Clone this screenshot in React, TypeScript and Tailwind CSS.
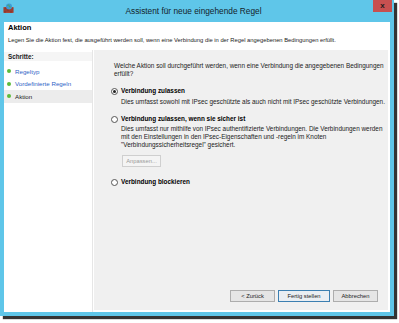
import React from "react";

const font = { fontFamily: '"Liberation Sans", Arial, sans-serif' };

function Radio({ checked }: { checked?: boolean }) {
  return (
    <span className="w-[7px] h-[7px] rounded-full border border-[#555] bg-white flex items-center justify-center shrink-0">
      {checked && <span className="w-[3px] h-[3px] rounded-full bg-[#222]" />}
    </span>
  );
}

function FirewallIcon() {
  return (
    <svg width="11" height="10" viewBox="0 0 11 10">
      <rect x="0.5" y="4" width="10" height="6" fill="#a9473a" />
      <path d="M0.5 6h10M0.5 8h10M3 4v2M7 4v2M5 6v2M2 8v2M8 8v2" stroke="#7a2d24" strokeWidth="0.6" />
      <circle cx="6" cy="3.5" r="3" fill="#3d9bd6" />
      <path d="M4.5 2.5c1-1 2-0.2 1.8 0.8c-0.3 1 1 1.2 1.5 0.5" stroke="#4caf50" strokeWidth="1" fill="none" />
    </svg>
  );
}

function Button({ label, primary, disabled }: { label: string; primary?: boolean; disabled?: boolean }) {
  return (
    <div
      className={`h-[12px] flex items-center justify-center text-[5.8px] border ${
        primary ? "border-[#3c7fb1] bg-[#e9eef3]" : "border-[#adadad] bg-[#e5e5e5]"
      } ${disabled ? "text-[#9a9a9a] bg-[#f4f4f4] border-[#cfcfcf]" : "text-[#222]"}`}
    >
      {label}
    </div>
  );
}

export default function App() {
  return (
    <div className="w-[399px] h-[323px] bg-white overflow-hidden" style={font}>
      <div className="w-[394px] h-[316px] bg-[#5fc6e9] flex flex-col shadow-[3px_3px_1px_rgba(30,30,30,0.9)]">
        {/* title bar */}
        <div className="h-[22px] flex items-start relative">
          <div className="pl-[3px] pt-[3px]">
            <FirewallIcon />
          </div>
          <div className="flex-1 text-center text-[8.3px] text-[#14242c] pt-[5px]">
            Assistent für neue eingehende Regel
          </div>
          <div className="w-[19px] h-[12px] bg-[#c75050] mr-[2px] flex items-center justify-center text-[8px] font-bold text-[#1c1c1c] leading-none">
            x
          </div>
        </div>

        {/* client */}
        <div className="flex-1 mx-[4px] mb-[4px] bg-white flex flex-col">
          <div className="h-[28px] px-[4px] pt-[1px]">
            <div className="text-[7.5px] font-bold text-black leading-[9px]">Aktion</div>
            <div className="text-[5.8px] text-[#222] mt-[4px] leading-[8px]">
              Legen Sie die Aktion fest, die ausgeführt werden soll, wenn eine Verbindung die in der Regel angegebenen Bedingungen erfüllt.
            </div>
          </div>

          <div className="flex-1 flex">
            {/* steps */}
            <div className="w-[89px] shrink-0 pt-[2px] border-r border-[#e6e6e6]">
              <div className="h-[9px] bg-[#f5f5f5] px-[4px] text-[6.3px] font-bold leading-[9px] text-[#222]">
                Schritte:
              </div>
              <div className="mt-[4px] flex flex-col text-[6.2px]">
                {[
                  { label: "Regeltyp", link: true },
                  { label: "Vordefinierte Regeln", link: true },
                  { label: "Aktion", link: false },
                ].map((s) => (
                  <div
                    key={s.label}
                    className={`h-[12.5px] flex items-center gap-[4px] px-[3px] ${s.link ? "text-[#2f63c6]" : "text-[#222] bg-[#ececec]"}`}
                  >
                    <span className="w-[4px] h-[4px] rounded-full bg-[#5dbb3a]" />
                    {s.label}
                  </div>
                ))}
              </div>
            </div>

            {/* content */}
            <div className="flex-1 min-w-0 overflow-hidden bg-[#f0f0f0] mr-[2px] mb-[2px] ml-[1px] flex flex-col text-[6.4px] text-[#222] whitespace-nowrap">
              <div className="pl-[20px] pt-[12px] leading-[8px]">
                Welche Aktion soll durchgeführt werden, wenn eine Verbindung die angegebenen Bedingungen
                <br />
                erfüllt?
              </div>

              <div className="pl-[17px] mt-[9px] flex flex-col">
                <div className="flex items-center gap-[3px] h-[8px]">
                  <Radio checked />
                  <span className="font-bold text-black">Verbindung zulassen</span>
                </div>
                <div className="pl-[10px] mt-[3px] leading-[8px]">
                  Dies umfasst sowohl mit IPsec geschützte als auch nicht mit IPsec geschützte Verbindungen.
                </div>

                <div className="flex items-center gap-[3px] h-[8px] mt-[9px]">
                  <Radio />
                  <span className="font-bold text-black">Verbindung zulassen, wenn sie sicher ist</span>
                </div>
                <div className="pl-[10px] mt-[2px] leading-[8px]">
                  Dies umfasst nur mithilfe von IPsec authentifizierte Verbindungen. Die Verbindungen werden
                  <br />
                  mit den Einstellungen in den IPsec-Eigenschaften und -regeln im Knoten
                  <br />
                  "Verbindungssicherheitsregel" gesichert.
                </div>
                <div className="pl-[11px] mt-[6px] flex">
                  <div className="w-[39px]">
                    <Button label="Anpassen..." disabled />
                  </div>
                </div>

                <div className="flex items-center gap-[3px] h-[8px] mt-[11px]">
                  <Radio />
                  <span className="font-bold text-black">Verbindung blockieren</span>
                </div>
              </div>

              <div className="flex-1" />
              <div className="flex justify-end gap-[3px] pr-[10px] pb-[8px]">
                <div className="w-[45px]">
                  <Button label="< Zurück" />
                </div>
                <div className="w-[52px]">
                  <Button label="Fertig stellen" primary />
                </div>
                <div className="w-[45px]">
                  <Button label="Abbrechen" />
                </div>
              </div>
            </div>
          </div>
        </div>
      </div>
    </div>
  );
}
